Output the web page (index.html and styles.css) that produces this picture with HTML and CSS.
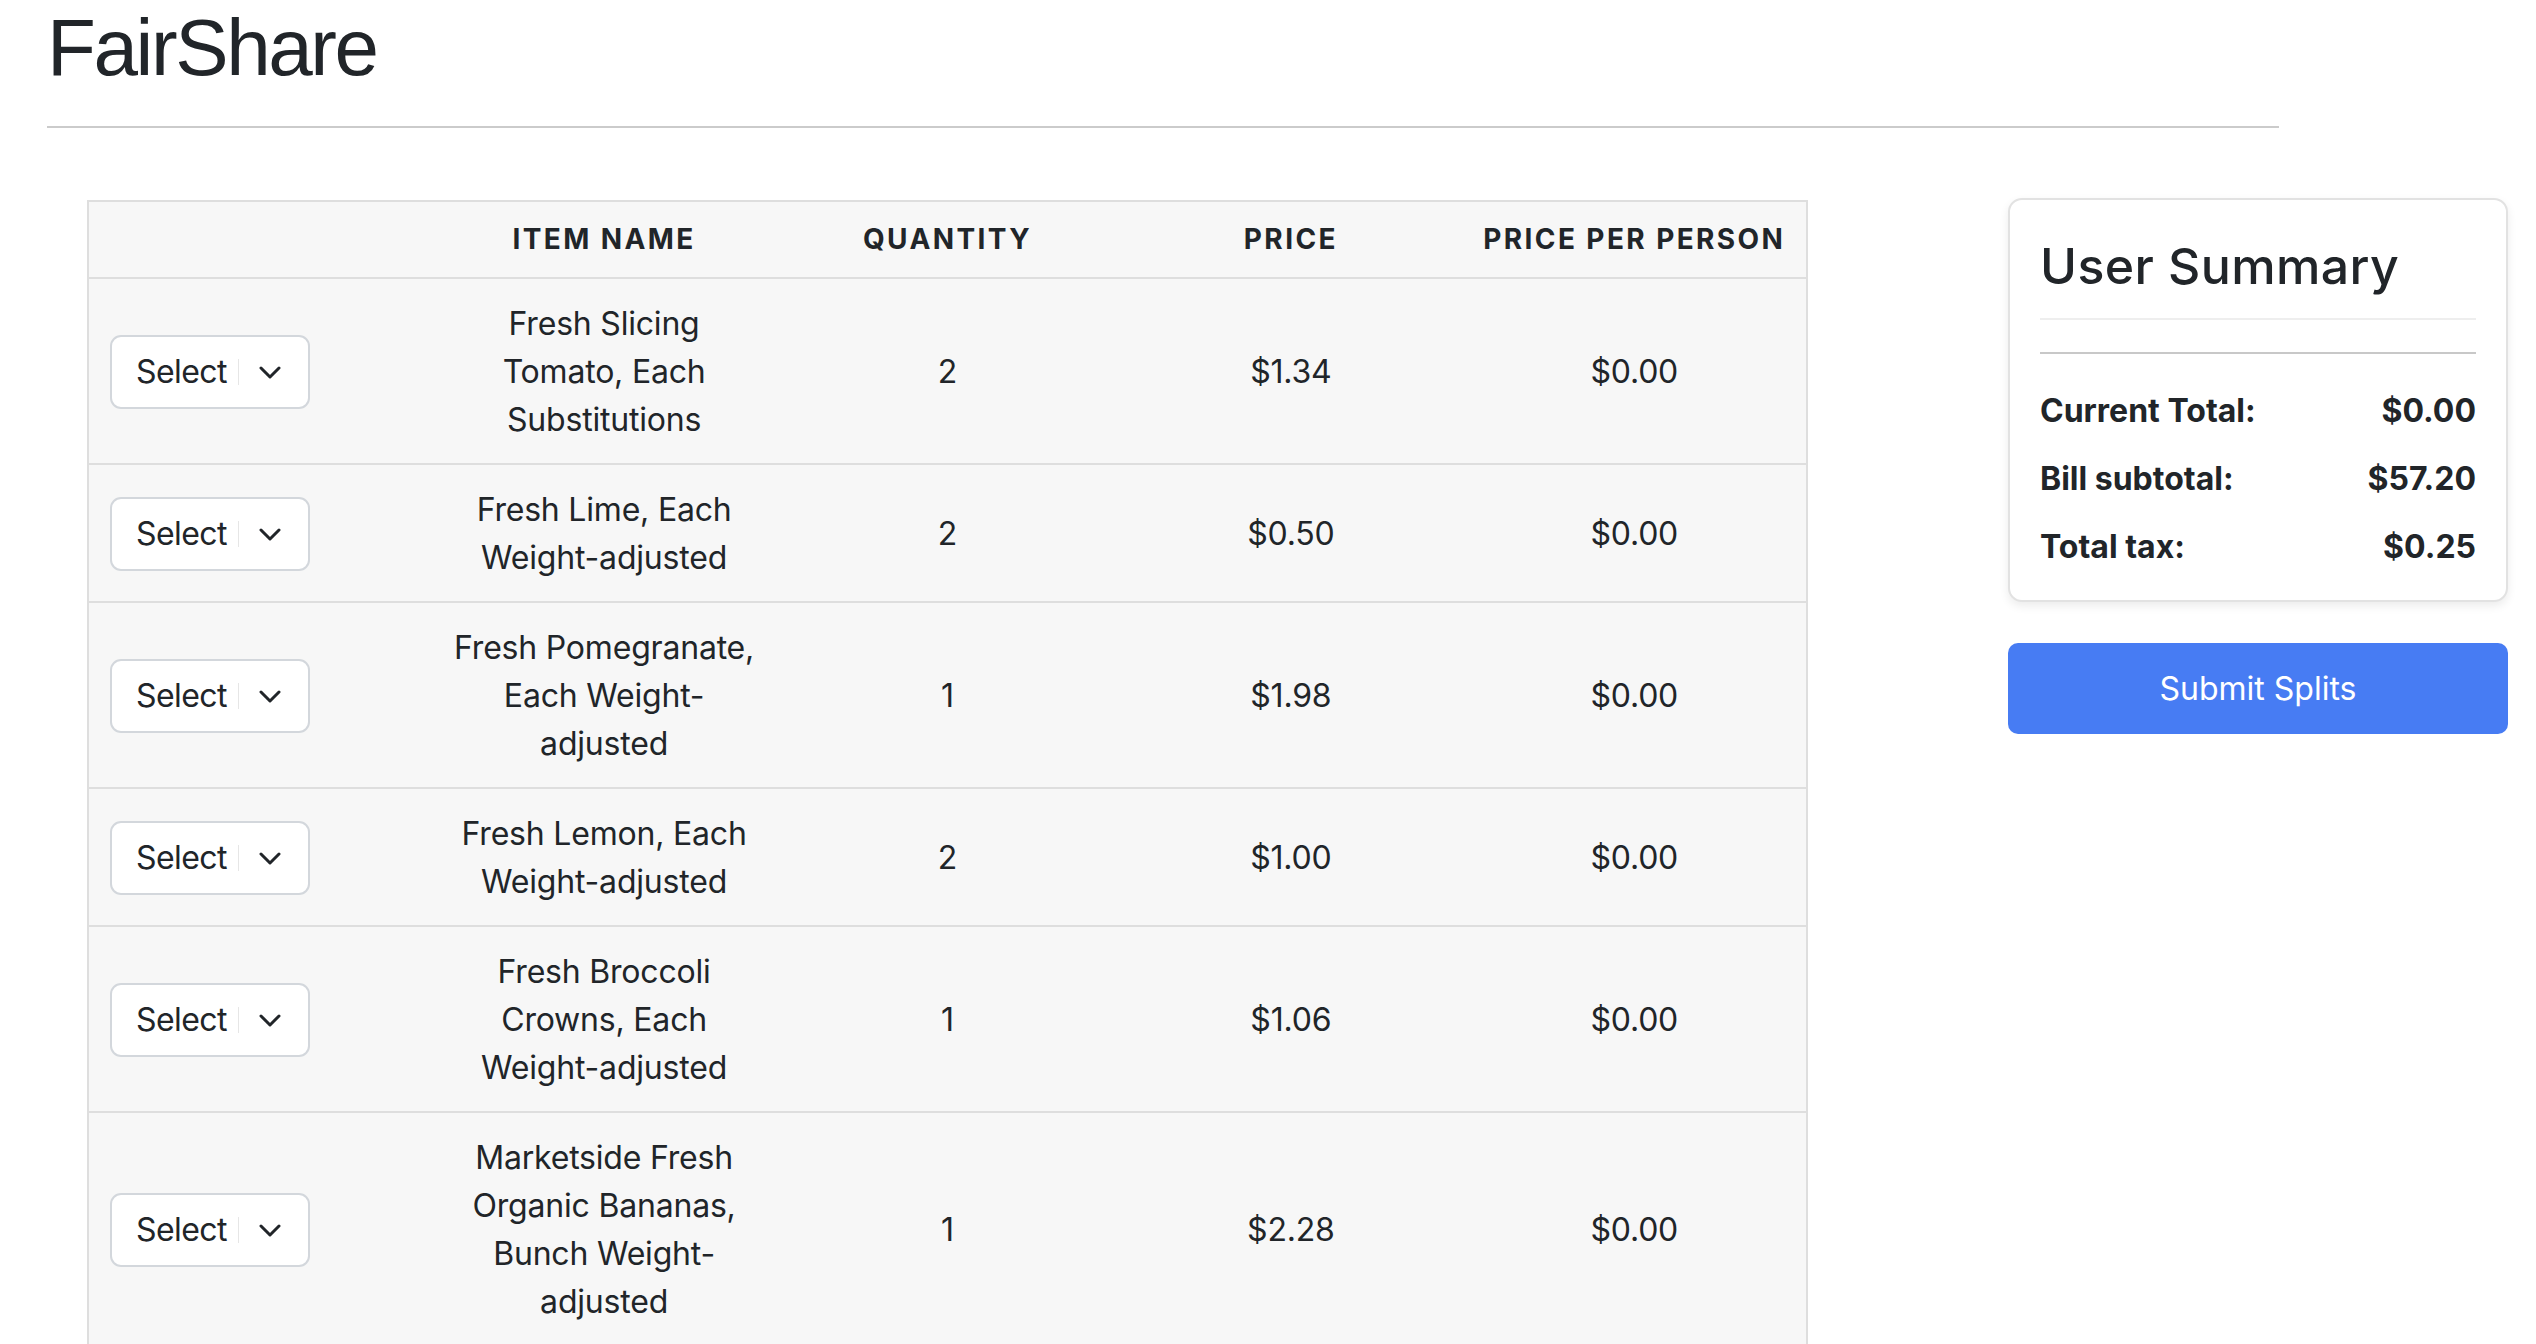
FILE: index.html
```html
<!DOCTYPE html>
<html lang="en">
<head>
<meta charset="utf-8">
<title>FairShare</title>
<link rel="stylesheet" href="styles.css">
</head>
<body>
<header class="page-header">
  <h1 class="brand">FairShare</h1>
  <hr class="divider">
</header>
<main class="content">
  <table class="items">
    <thead>
      <tr><th></th><th>Item Name</th><th>Quantity</th><th>Price</th><th>Price per person</th></tr>
    </thead>
    <tbody>
      <tr>
        <td class="pick"><div class="select"><span class="select-label">Select</span><span class="select-sep"></span><svg class="chev" width="22" height="13" viewBox="0 0 22 13"><path d="M2 2 L11 11 L20 2" fill="none" stroke="#212529" stroke-width="3" stroke-linecap="round" stroke-linejoin="round"/></svg></div></td>
        <td>Fresh Slicing Tomato, Each Substitutions</td><td>2</td><td>$1.34</td><td>$0.00</td>
      </tr>
      <tr>
        <td class="pick"><div class="select"><span class="select-label">Select</span><span class="select-sep"></span><svg class="chev" width="22" height="13" viewBox="0 0 22 13"><path d="M2 2 L11 11 L20 2" fill="none" stroke="#212529" stroke-width="3" stroke-linecap="round" stroke-linejoin="round"/></svg></div></td>
        <td>Fresh Lime, Each Weight-adjusted</td><td>2</td><td>$0.50</td><td>$0.00</td>
      </tr>
      <tr>
        <td class="pick"><div class="select"><span class="select-label">Select</span><span class="select-sep"></span><svg class="chev" width="22" height="13" viewBox="0 0 22 13"><path d="M2 2 L11 11 L20 2" fill="none" stroke="#212529" stroke-width="3" stroke-linecap="round" stroke-linejoin="round"/></svg></div></td>
        <td>Fresh Pomegranate, Each Weight-adjusted</td><td>1</td><td>$1.98</td><td>$0.00</td>
      </tr>
      <tr>
        <td class="pick"><div class="select"><span class="select-label">Select</span><span class="select-sep"></span><svg class="chev" width="22" height="13" viewBox="0 0 22 13"><path d="M2 2 L11 11 L20 2" fill="none" stroke="#212529" stroke-width="3" stroke-linecap="round" stroke-linejoin="round"/></svg></div></td>
        <td>Fresh Lemon, Each Weight-adjusted</td><td>2</td><td>$1.00</td><td>$0.00</td>
      </tr>
      <tr>
        <td class="pick"><div class="select"><span class="select-label">Select</span><span class="select-sep"></span><svg class="chev" width="22" height="13" viewBox="0 0 22 13"><path d="M2 2 L11 11 L20 2" fill="none" stroke="#212529" stroke-width="3" stroke-linecap="round" stroke-linejoin="round"/></svg></div></td>
        <td>Fresh Broccoli Crowns, Each Weight-adjusted</td><td>1</td><td>$1.06</td><td>$0.00</td>
      </tr>
      <tr>
        <td class="pick"><div class="select"><span class="select-label">Select</span><span class="select-sep"></span><svg class="chev" width="22" height="13" viewBox="0 0 22 13"><path d="M2 2 L11 11 L20 2" fill="none" stroke="#212529" stroke-width="3" stroke-linecap="round" stroke-linejoin="round"/></svg></div></td>
        <td>Marketside Fresh Organic Bananas, Bunch Weight-adjusted</td><td>1</td><td>$2.28</td><td>$0.00</td>
      </tr>
    </tbody>
  </table>
  <aside class="sidebar">
    <section class="card">
      <h2 class="card-title">User Summary</h2>
      <hr class="card-rule">
      <div class="stat"><span>Current Total:</span><span>$0.00</span></div>
      <div class="stat"><span>Bill subtotal:</span><span>$57.20</span></div>
      <div class="stat"><span>Total tax:</span><span>$0.25</span></div>
    </section>
    <button class="submit" type="button">Submit Splits</button>
  </aside>
</main>
</body>
</html>
```

FILE: styles.css
```css
* { box-sizing: border-box; }

html, body {
  margin: 0;
  background: #ffffff;
}

body {
  font-family: Inter, "Noto Sans", sans-serif;
  color: #212529;
  font-size: 32px;
  line-height: 1.5;
  overflow: hidden;
}

.page-header {
  width: 2279px;
  padding-left: 47px;
}

.brand {
  margin: 0;
  font-family: "Liberation Sans", Arial, sans-serif;
  font-size: 80px;
  font-weight: 400;
  line-height: 96px;
  letter-spacing: -2.4px;
}

.divider {
  border: 0;
  height: 2px;
  margin: 30px 0 0;
  background: #cbcbcb;
}

.content {
  display: flex;
  align-items: flex-start;
  padding-left: 87px;
  margin-top: 70px;
}

.items {
  width: 1721px;
  flex: none;
  margin-top: 2px;
  table-layout: fixed;
  border-collapse: separate;
  border-spacing: 0;
  border: 2px solid #dedede;
  background: #f7f7f7;
}

.items th {
  padding: 16px 14px;
  line-height: 43px;
  font-size: 28px;
  font-weight: 700;
  letter-spacing: 2.4px;
  text-transform: uppercase;
  text-align: center;
  border-bottom: 2px solid #dedede;
}

.items td {
  padding: 21px 14px 19px;
  line-height: 48px;
  letter-spacing: -0.2px;
  text-align: center;
  vertical-align: middle;
  border-bottom: 2px solid #dedede;
}

.items td.pick {
  text-align: left;
  padding-left: 21px;
}

.select {
  display: flex;
  align-items: center;
  width: 200px;
  height: 74px;
  padding-left: 24px;
  background: #ffffff;
  border: 2px solid #d3d7dc;
  border-radius: 11px;
}

.select-label {
  line-height: 48px;
  letter-spacing: -0.6px;
}

.select-sep {
  width: 1px;
  height: 26px;
  margin-left: 11px;
  background: #e6e6e6;
}

.chev {
  margin-left: 20px;
}

.sidebar {
  flex: none;
  width: 500px;
  margin-left: 200px;
}

.card {
  background: #ffffff;
  border: 2px solid #e2e2e2;
  border-radius: 14px;
  box-shadow: 0 4px 10px rgba(0, 0, 0, 0.08);
  padding: 39px 30px 29px;
}

.card-title {
  margin: 0;
  font-size: 50px;
  font-weight: 500;
  line-height: 54px;
  letter-spacing: 0.4px;
  padding-bottom: 25px;
  border-bottom: 2px solid #eeeeee;
}

.card-rule {
  border: 0;
  height: 2px;
  margin: 32px 0 33px;
  background: #c8c8c8;
}

.stat {
  display: flex;
  justify-content: space-between;
  font-weight: 700;
  line-height: 48px;
}

.stat + .stat {
  margin-top: 20px;
}

.submit {
  display: block;
  width: 100%;
  height: 91px;
  margin-top: 41px;
  border: 0;
  border-radius: 10px;
  background: #477cf3;
  color: #ffffff;
  font-family: Inter, "Noto Sans", sans-serif;
  font-size: 32px;
  font-weight: 400;
}
```
